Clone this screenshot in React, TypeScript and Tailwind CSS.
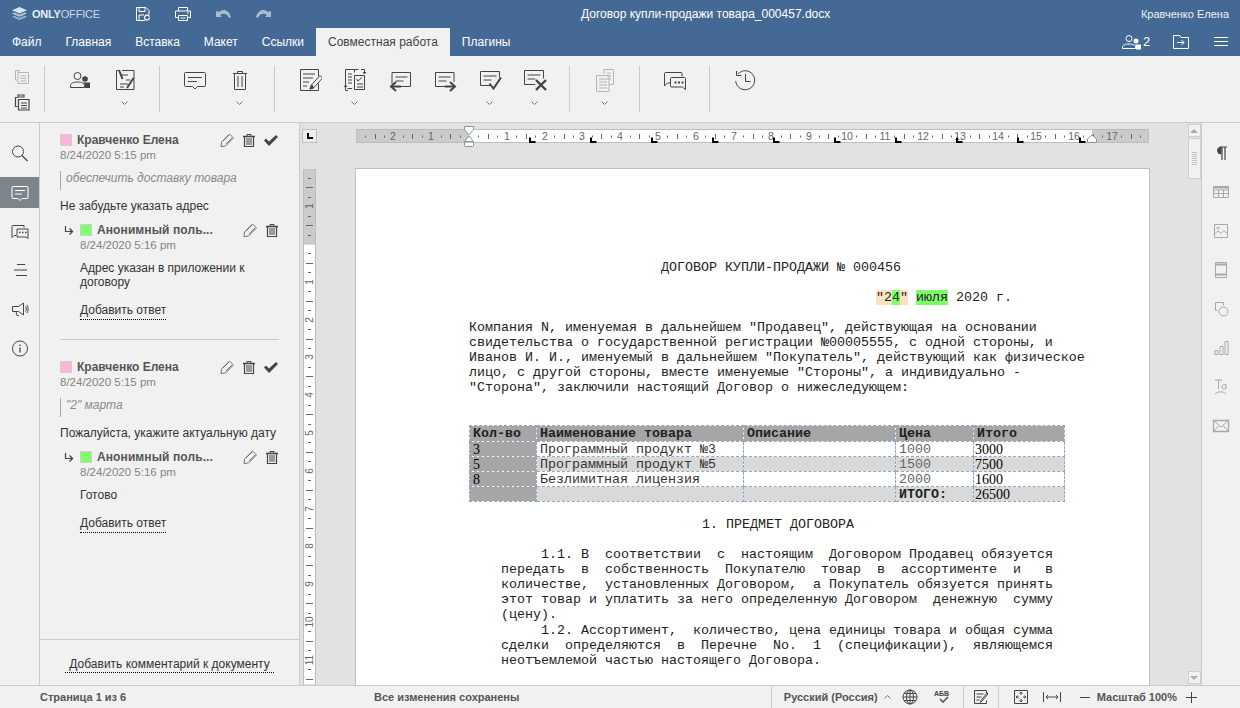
import React from 'react';

const sans = "font-['Liberation_Sans',Arial,sans-serif]";
const mono = "font-['Liberation_Mono','Courier_New',monospace]";
const serif = "font-['Liberation_Serif','Times_New_Roman',serif]";

const Svg: React.FC<{ w?: number; h?: number; className?: string; children: React.ReactNode }> = ({ w = 24, h = 24, className = '', children }) => (
  <svg width={w} height={h} viewBox={`0 0 ${w} ${h}`} fill="none" stroke="currentColor" strokeWidth={1} className={`block shrink-0 ${className}`}>
    {children}
  </svg>
);

// --- toolbar icons, 24x24, top edge at y=68
const icons: Record<string, React.ReactNode> = {
  users: (
    <>
      <circle cx="9.5" cy="8" r="3.5" />
      <path d="M2.5 19.5v-1.8c0-2.4 3-3.7 7-3.7s7 1.3 7 3.7v1.8z" />
      <circle cx="17" cy="11" r="2.8" fill="currentColor" stroke="none" />
      <path d="M15 14.5h7v5.5h-5.2v-3.5z" fill="currentColor" stroke="none" />
    </>
  ),
  review: (
    <>
      <path d="M9 2.5h12v19H3.5v-19h2" />
      <path d="M7 7h8M7 16h8M7 19h4M13 12h4" />
      <path d="M6 2l3.5 9" strokeWidth={2} />
      <path d="M20.5 10l-6.500 10" strokeWidth={2} />
    </>
  ),
  comment: (
    <>
      <path d="M2.5 4.5h19a1 1 0 0 1 1 1v12a1 1 0 0 1-1 1h-7l-2.5 2.5-2.5-2.5h-7a1 1 0 0 1-1-1v-12a1 1 0 0 1 1-1z" />
      <path d="M5 9.5h14M5 13.5h9" />
    </>
  ),
  trash: (
    <>
      <path d="M5 5.5h14M9.5 5.5v-2h5v2" />
      <path d="M6.5 5.5v15.500a.5.5 0 0 0 .5.5h10a.5.5 0 0 0 .5-.5v-15.500" />
      <path d="M10 8v11M14 8v11" />
    </>
  ),
  edit: (
    <>
      <path d="M20.5 8V1.500h-18v21h18v-7" />
      <path d="M5 6h12M5 10h10M5 14h6M5 18h4" />
      <path d="M22 7.500l-9 10-1 3.500 3.500-1 9-10z" fill="#f1f1f1" />
      <path d="M12 21l2-4 1.500 3z" fill="currentColor" />
    </>
  ),
  compare: (
    <>
      <path d="M9 20.5H4.500m-2-2V1.500h9v3M11.500 1.500h4" />
      <path d="M5 6h4M5 9h4M5 12h4M5 15h4" />
      <path d="M11.5 7.500h10v14h-10z" />
      <path d="M13.5 11l1.500 2 4-3.500M14 16h6M14 19h6" />
      <path d="M18 1.5h3.500v4M20 4l1.500 2 1.500-2" />
      <path d="M5 22.5H2.500v-5M1 19l1.500-2 1.500 2" />
    </>
  ),
  prev: (
    <>
      <path d="M4 16V4.500h18.500v14H12" />
      <path d="M7.5 9h12M7.500 13h8" />
      <path d="M3 18.5h10" strokeWidth={2} />
      <path d="M8 14l-5 4.500 5 4.500" strokeWidth={2} />
    </>
  ),
  next: (
    <>
      <path d="M12 18.5H2.500v-14h18.500V14" />
      <path d="M5.5 9h12M5.500 13h8" />
      <path d="M12 18.5h10" strokeWidth={2} />
      <path d="M17 14l5 4.500-5 4.500" strokeWidth={2} />
    </>
  ),
  accept: (
    <>
      <path d="M13 17.5H2.500v-14h19v6" />
      <path d="M5.5 8h13M5.500 12h8" />
      <path d="M11.5 15.500l4 5 7.500-11" strokeWidth={2} />
    </>
  ),
  reject: (
    <>
      <path d="M12 16.5H1.500v-14h19v8" />
      <path d="M4.5 7h13M4.500 11h8" />
      <path d="M13 12l10 10M23 12l-10 10" strokeWidth={2.4} />
    </>
  ),
  pages: (
    <>
      <path d="M11 6V1.500h9.500v15H16" />
      <path d="M14 5h4M14 8h4M14 11h4" />
      <path d="M3.5 7.500h12.500v16H3.500z" />
      <path d="M6 11h8M6 14h8M6 17h8M6 20h8" />
    </>
  ),
  chat: (
    <>
      <path d="M19 8.5V5.500a1 1 0 0 0-1-1H2.500a1 1 0 0 0-1 1v12.500l3-3h3" />
      <path d="M8.5 9.500h13a1 1 0 0 1 1 1v11l-3-2.500h-11a1 1 0 0 1-1-1v-7.500a1 1 0 0 1 1-1z" />
      <path d="M11.5 14.500h2M15 14.500h2M18.500 14.500h2" strokeWidth={2} />
    </>
  ),
  history: (
    <>
      <path d="M5 6a9.500 9.500 0 1 1-2.300 7" />
      <path d="M3.5 3v4.500h5" />
      <path d="M12.5 6v7.500h5" />
    </>
  ),
};

const Chevron: React.FC = () => (
  <svg width="7" height="4" viewBox="0 0 7 4" fill="none" stroke="#777" className="block">
    <path d="M.5.5l3 3 3-3" />
  </svg>
);

const ToolButton: React.FC<{ icon: string; arrow?: boolean; muted?: boolean }> = ({ icon, arrow, muted }) => (
  <div className={`w-[45px] flex flex-col items-center ${muted ? 'text-[#b5b5b5]' : 'text-[#444444]'}`}>
    <Svg>{icons[icon]}</Svg>
    {arrow && <div className="mt-[9px]"><Chevron /></div>}
  </div>
);

const Divider: React.FC = () => <div className="w-px h-[46px] bg-[#cbcbcb] mt-[10px] shrink-0" />;

const Group: React.FC<{ children: React.ReactNode }> = ({ children }) => (
  <div className="flex px-3 pt-3 items-start">{children}</div>
);

// --- small comment icons
const PencilIcon: React.FC = () => (
  <svg width="14" height="14" viewBox="0 0 14 14" fill="none" stroke="#666" strokeWidth={0.9} className="block">
    <path d="M9.5 1l4 4-8 8-4.500.5.5-4.500z" />
    <path d="M3 8l6-6M6 11l6-6" />
  </svg>
);
const BinIcon: React.FC = () => (
  <svg width="12" height="14" viewBox="0 0 12 14" fill="none" stroke="#444" className="block">
    <path d="M0 3.500h12" strokeWidth={1.5} />
    <path d="M4 3V1.500h4V3" />
    <path d="M1.5 4v9.500h9V4" strokeWidth={1.2} />
    <path d="M4 5v7M6 5v7M8 5v7" />
  </svg>
);
const CheckIcon: React.FC = () => (
  <svg width="14" height="11" viewBox="0 0 14 11" fill="#444" className="block">
    <path d="M0 5.500l2-2 3 3 7-6.500 2 2-9 9z" />
  </svg>
);

const ReplyBlock: React.FC<{ body: string[]; bodyGap: string; linkGap: string }> = ({ body, bodyGap, linkGap }) => (
  <div className="relative pl-[40px] pr-[20px]">
    <svg width="10" height="10" viewBox="0 0 10 10" fill="none" stroke="#444" className="absolute left-[24px] top-[3px]">
      <path d="M1.5 0v5.500H8" strokeWidth={1.2} />
      <path d="M5.5 2.500L8.500 5.500l-3 3" strokeWidth={1.4} />
    </svg>
    <div className="flex items-center h-[15px] relative -top-[1px]">
      <span className="w-3 h-3 bg-[#7dff6b] border border-[#cfcfcf] shrink-0" />
      <span className="ml-[5px] font-bold text-[#555555] text-[12px] tracking-[.1px]">Анонимный поль...</span>
      <div className="absolute right-[1px] top-[1px] flex items-center gap-[9px]">
        <PencilIcon />
        <BinIcon />
      </div>
    </div>
    <div className="text-[#848484] text-[11.5px] leading-[15px] font-medium">8/24/2020 5:16 pm</div>
    <div className={`${bodyGap} text-[12px] leading-[14px] text-[#333333] pr-3`}>
      {body.map(l => <div key={l}>{l}</div>)}
    </div>
    <div className={`${linkGap} leading-[14px]`}>
      <span className="inline-block text-[12px] text-[#333333] border-b border-dotted border-black pb-[2px]">Добавить ответ</span>
    </div>
  </div>
);

const Comment: React.FC<{ quote: string; text: string; children: React.ReactNode }> = ({ quote, text, children }) => (
  <div>
    <div className="pl-[20px] pr-[20px]">
      <div className="flex items-center h-[17px] relative">
        <span className="w-3 h-3 bg-[#ffb3d9] border border-[#cfcfcf] shrink-0" />
        <span className="ml-[5px] font-bold text-[#555555] text-[12px]">Кравченко Елена</span>
        <div className="absolute right-[1px] top-[2px] flex items-center gap-[9px]">
          <PencilIcon />
          <BinIcon />
          <CheckIcon />
        </div>
      </div>
      <div className="text-[#848484] text-[11.5px] leading-[15px] font-medium">8/24/2020 5:15 pm</div>
      <div className="mt-[8px] border-l border-[#a8a8a8] pl-[5px] h-[19px] leading-[14px] italic text-[#8a8a8a] text-[12px]">{quote}</div>
      <div className="mt-[9px] text-[12px] leading-[14px] text-[#333333] whitespace-nowrap">{text}</div>
    </div>
    <div className="mt-[10px]">{children}</div>
  </div>
);

// --- rulers
const cm = 37.8;
const range = (a: number, b: number) => Array.from({ length: b - a + 1 }, (_, i) => a + i);

const HRuler: React.FC = () => {
  const zero = 113;
  return (
    <svg width="793" height="14" viewBox="0 0 793 14" className="block overflow-visible ml-[39px]">
      <rect x=".5" y=".5" width="792" height="13" fill="#cbcbcb" stroke="#bdbdbd" />
      <rect x="113" y="1" width="623" height="12" fill="#fff" />
      {range(-12, 72).map(q => {
        const x = Math.round(zero + (q * cm) / 4);
        if (x < 4 || x > 790) return null;
        if (q === 0) return null;
        if (q % 4 === 0) {
          return (
            <text key={q} x={x} y="11" textAnchor="middle" fontSize="10.5" fill="#666" fontFamily="Liberation Sans">
              {Math.abs(q / 4)}
            </text>
          );
        }
        if (q % 2 === 0) return <rect key={q} x={x} y="5" width="1" height="5" fill="#666" />;
        return <rect key={q} x={x} y="6.5" width="1" height="2" fill="#666" />;
      })}
      {[173, 234, 295, 356, 417, 478, 539, 600, 661, 723].map(x => (
        <path key={x} d={`M${x} 8.500h2v3.500h4.500v2H${x}z`} fill="#000" />
      ))}
      {/* indent markers */}
      <path d="M108.5-2.500h9v3L113 6l-4.500-5.500z" fill="#fff" stroke="#8a939c" />
      <path d="M113 7l4.500 5.500H108.500z" fill="#fff" stroke="#8a939c" />
      <path d="M108.5 13h9v3.500a1 1 0 0 1-1 1h-7a1 1 0 0 1-1-1z" fill="#fff" stroke="#8a939c" />
      <path d="M736 6l4.500 4v3.500h-9V10z" fill="#fff" stroke="#8a939c" />
    </svg>
  );
};

const VRuler: React.FC = () => {
  const zero = 75;
  return (
    <svg width="13" height="516" viewBox="0 0 13 516" className="block">
      <rect x=".5" y="0" width="12" height="516" fill="#fff" stroke="#bdbdbd" />
      <rect x=".5" y="0" width="12" height="75" fill="#cbcbcb" stroke="#bdbdbd" />
      {range(-7, 46).map(q => {
        const y = Math.round(zero + (q * cm) / 4);
        if (y < 3 || q === 0) return null;
        if (q % 4 === 0) {
          return (
            <text key={q} x="6" y={y} textAnchor="middle" fontSize="10" fill="#666" fontFamily="Liberation Sans" transform={`rotate(-90 6 ${y}) translate(0 3.500)`}>
              {Math.abs(q / 4)}
            </text>
          );
        }
        if (q % 2 === 0) return <rect key={q} x="3" y={y} width="7" height="1" fill="#666" />;
        return <rect key={q} x="5" y={y} width="3" height="1" fill="#666" />;
      })}
    </svg>
  );
};

// --- document
const rows = [
  { q: '3', name: 'Программный продукт №3', price: '1000', total: '3000', bg: 'bg-white' },
  { q: '5', name: 'Программный продукт №5', price: '1500', total: '7500', bg: 'bg-[#d9d9d9]' },
  { q: '8', name: 'Безлимитная лицензия', price: '2000', total: '1600', bg: 'bg-white' },
];
const cell = 'border border-dashed border-[#8fa9cc] pl-[3px] pr-0 pt-[1px] pb-0 leading-[13px] align-top whitespace-nowrap overflow-hidden';
const totalCell = 'border border-dashed border-[#8fa9cc] pl-[1px] pr-0 pt-[1px] pb-0 leading-[13px] align-top whitespace-nowrap overflow-hidden';

const DocTable: React.FC = () => (
  <table className="table-fixed border-collapse w-[595px] text-[13.33px] text-[#222222]">
    <colgroup>
      <col className="w-[67px]" />
      <col className="w-[207px]" />
      <col className="w-[152px]" />
      <col className="w-[78px]" />
      <col className="w-[91px]" />
    </colgroup>
    <tbody>
      <tr className="bg-[#a6a6a6] h-[16px] font-bold">
        {['Кол-во', 'Наименование товара', 'Описание', 'Цена', 'Итого'].map(h => (
          <td key={h} className={`${cell} ${mono}`}>{h}</td>
        ))}
      </tr>
      {rows.map(r => (
        <tr key={r.q} className={`${r.bg} h-[15px]`}>
          <td className={`${cell} ${serif} bg-[#a6a6a6] text-black text-[14px]`}>{r.q}</td>
          <td className={`${cell} ${mono} text-[#333333]`}>{r.name}</td>
          <td className={cell}></td>
          <td className={`${cell} ${mono} text-[#666666]`}>{r.price}</td>
          <td className={`${totalCell} ${serif} text-black text-[14px]`}>{r.total}</td>
        </tr>
      ))}
      <tr className="bg-[#d9d9d9] h-[15px]">
        <td className={`${cell} bg-[#a6a6a6]`}></td>
        <td className={cell}></td>
        <td className={cell}></td>
        <td className={`${cell} ${mono} font-bold`}>ИТОГО:</td>
        <td className={`${totalCell} ${serif} text-black text-[14px]`}>26500</td>
      </tr>
    </tbody>
  </table>
);

const Page: React.FC = () => (
  <div className={`w-[795px] h-[620px] bg-white border border-[#bfbfbf] ml-[39px] pt-[91px] ${mono} text-[13.33px] leading-[15px] text-[#222222] whitespace-pre`}>
    <div className="pl-[305px]">ДОГОВОР КУПЛИ-ПРОДАЖИ № 000456</div>
    <div className="mt-[15px] pl-[520px]">
      <span className="bg-[#fbe3bd]">"2</span><span className="bg-[#7dff6b]">4</span><span className="bg-[#fbe3bd]">"</span>{' '}
      <span className="bg-[#7dff6b]">июля</span> 2020 г.
    </div>
    <div className="mt-[15px] pl-[113px]">
      <div>Компания N, именуемая в дальнейшем "Продавец", действующая на основании</div>
      <div>свидетельства о государственной регистрации №00005555, с одной стороны, и</div>
      <div>Иванов И. И., именуемый в дальнейшем "Покупатель", действующий как физическое</div>
      <div>лицо, с другой стороны, вместе именуемые "Стороны", а индивидуально -</div>
      <div>"Сторона", заключили настоящий Договор о нижеследующем:</div>
    </div>
    <div className="mt-[30px] pl-[113px]"><DocTable /></div>
    <div className="mt-[15px] pl-[346px]">1. ПРЕДМЕТ ДОГОВОРА</div>
    <div className="mt-[15px] pl-[145px]">
      <div>     1.1. В  соответствии  с  настоящим  Договором Продавец обязуется</div>
      <div>передать  в  собственность  Покупателю  товар  в  ассортименте  и   в</div>
      <div>количестве,  установленных Договором,  а Покупатель обязуется принять</div>
      <div>этот товар и уплатить за него определенную Договором  денежную  сумму</div>
      <div className="mb-[1px]">(цену).</div>
      <div className="mt-[1px]">     1.2. Ассортимент,  количество, цена единицы товара и общая сумма</div>
      <div>сделки  определяются  в  Перечне  No.  1  (спецификации),  являющемся</div>
      <div>неотъемлемой частью настоящего Договора.</div>
    </div>
  </div>
);

const SideIcon: React.FC<{ active?: boolean; children: React.ReactNode }> = ({ active, children }) => (
  <div className={`h-[31px] w-full flex items-center justify-center ${active ? 'bg-[#7d858c] text-white' : 'text-[#444444]'}`}>
    <Svg w={20} h={20}>{children}</Svg>
  </div>
);

const RightIcon: React.FC<{ children: React.ReactNode; dark?: boolean }> = ({ children, dark }) => (
  <div className={`h-[39px] flex items-center justify-center ${dark ? 'text-[#444444]' : 'text-[#a8a8a8]'}`}>
    <Svg w={18} h={18}>{children}</Svg>
  </div>
);

const App: React.FC = () => (
  <div className={`w-[1240px] h-[708px] overflow-hidden flex flex-col bg-[#f1f1f1] ${sans} text-[12px]`}>
    {/* title bar */}
    <div className="h-[28px] bg-[#446995] flex items-center relative text-white shrink-0">
      <div className="flex items-center ml-[12px] w-[123px]">
        <svg width="15" height="14" viewBox="0 0 15 14" fill="#d9e2ec" className="block">
          <path d="M7.5 0L15 3.200 7.500 6.400 0 3.200z" />
          <path d="M2 5.5l5.500 2.300L13 5.500l2 1-7.500 3.200L0 6.500z" opacity=".8" />
          <path d="M2 8.8l5.500 2.300L13 8.800l2 1L7.500 13 0 9.800z" opacity=".6" />
        </svg>
        <span className="ml-[5px] text-[11px] leading-none text-[#e8edf3] font-bold tracking-[-.2px]">ONLY<span className="font-normal text-[#cdd8e4]">OFFICE</span></span>
      </div>
      <div className="flex items-center">
        <div className="w-[40px] flex justify-center ml-[-12px]">
          <Svg w={16} h={16}>
            <path d="M10 14.5H1.500V1.500h9.500l3 3V8" />
            <path d="M4 1.5v4h6v-4M4 14v-5h5" />
            <path d="M14.5 11.500a2.500 2.500 0 1 1-1-2" strokeWidth={1.2} />
            <path d="M13 8v2h2" />
          </Svg>
        </div>
        <div className="w-[40px] flex justify-center">
          <Svg w={18} h={16}>
            <path d="M4.5 5V1.500h9V5" />
            <path d="M4.5 11.500h-3v-6.500h15v6.500h-3" />
            <path d="M4.5 9.500h9v5h-9z" />
            <path d="M6.5 12h5M13 7h2" />
          </Svg>
        </div>
        <div className="w-[40px] flex justify-center text-[#a9bcd2]">
          <svg width="15" height="10" viewBox="0 0 15 10" fill="currentColor" className="block">
            <path d="M0 2v6h6L4 6c3-2 7-2 9 3l2-1C13 1 7-1 3 3z" />
          </svg>
        </div>
        <div className="w-[40px] flex justify-center text-[#a9bcd2]">
          <svg width="15" height="10" viewBox="0 0 15 10" fill="currentColor" className="block">
            <path d="M15 2v6H9l2-2C8 4 4 4 2 9L0 8C2 1 8-1 12 3z" />
          </svg>
        </div>
      </div>
      <div className="absolute left-[581px] text-[12px] whitespace-nowrap">Договор купли-продажи товара_000457.docx</div>
      <div className="ml-auto mr-[11px] text-[11px] text-[#eef2f6]">Кравченко Елена</div>
    </div>

    {/* tabs */}
    <div className="h-[28px] bg-[#446995] flex items-stretch text-white shrink-0">
      <div className="flex items-stretch">
        {['Файл', 'Главная', 'Вставка', 'Макет', 'Ссылки'].map(t => (
          <div key={t} className="flex items-center px-[12px]">{t}</div>
        ))}
        <div className="flex items-center px-[12px] bg-[#f1f1f1] text-[#444444]">Совместная работа</div>
        <div className="flex items-center px-[12px]">Плагины</div>
      </div>
      <div className="ml-auto flex items-center">
        <div className="flex items-center w-[27px] mr-[24px]">
          <Svg w={20} h={16}>
            <circle cx="7" cy="4.5" r="3" />
            <path d="M.5 14.500v-1.500c0-2 3-3 6.500-3s6.500 1 6.500 3v1.500z" />
            <circle cx="14" cy="7" r="2.5" fill="currentColor" stroke="none" />
            <path d="M13 10.5h6v5h-5v-3z" fill="currentColor" stroke="none" />
          </Svg>
          <span className="ml-[1px] text-[13px]">2</span>
        </div>
        <div className="w-[16px] mr-[25px]">
          <Svg w={16} h={14}>
            <path d="M.5 13.500V.500h6.500l1 2h7.500v11z" />
            <path d="M4 7.5h7M8.500 5l2.500 2.500L8.500 10" />
          </Svg>
        </div>
        <div className="mr-[12px] w-[14px]">
          <Svg w={14} h={10}>
            <path d="M0 .5h14M0 4.500h14M0 8.500h14" />
          </Svg>
        </div>
      </div>
    </div>

    {/* toolbar */}
    <div className="h-[67px] flex border-b border-[#cbcbcb] shrink-0">
      <div className="w-[44px] flex flex-col items-center pt-[13px] text-[#444444]">
        <div className="text-[#b5b5b5]">
          <Svg w={16} h={16}>
            <path d="M5 3V1.500H1.500V11H3" />
            <path d="M4 3.5h10.500v11H4z" />
            <path d="M6.5 7h6M6.500 9.500h6M6.500 12h6" />
          </Svg>
        </div>
        <div className="mt-[9px]">
          <Svg w={16} h={17}>
            <path d="M3.5 12.500H1.500V3.500h2M4 3h6v-2H4z" strokeWidth={1.2} />
            <path d="M4.5 5.500h10.500v10.500H4.500z" strokeWidth={1.2} />
            <path d="M7 9h6M7 11.500h6M7 14h6" />
          </Svg>
        </div>
      </div>
      <Divider />
      <Group>
        <ToolButton icon="users" />
        <ToolButton icon="review" arrow />
      </Group>
      <Divider />
      <Group>
        <ToolButton icon="comment" />
        <ToolButton icon="trash" arrow />
      </Group>
      <Divider />
      <Group>
        <ToolButton icon="edit" />
        <ToolButton icon="compare" arrow />
        <ToolButton icon="prev" />
        <ToolButton icon="next" />
        <ToolButton icon="accept" arrow />
        <ToolButton icon="reject" arrow />
      </Group>
      <Divider />
      <Group>
        <ToolButton icon="pages" arrow muted />
      </Group>
      <Divider />
      <Group>
        <ToolButton icon="chat" />
      </Group>
      <Divider />
      <Group>
        <ToolButton icon="history" />
      </Group>
    </div>

    {/* main */}
    <div className="flex-1 min-h-0 flex">
      {/* left rail */}
      <div className="w-[40px] border-r border-[#cbcbcb] pt-[15px] flex flex-col gap-[8px] shrink-0">
        <SideIcon>
          <circle cx="8" cy="7.5" r="5.5" />
          <path d="M12 11.500l5.500 5.500" strokeWidth={1.3} />
        </SideIcon>
        <SideIcon active>
          <path d="M3 3.500h14a1 1 0 0 1 1 1v10a1 1 0 0 1-1 1h-5l-2 2-2-2H3a1 1 0 0 1-1-1v-10a1 1 0 0 1 1-1z" />
          <path d="M5 7.500h10M5 11h7" />
        </SideIcon>
        <SideIcon>
          <path d="M14 5.500V3.500H3a1 1 0 0 0-1 1v11l2-2h2" />
          <path d="M7 7h11v9.500l-2-1.500H7z" />
          <path d="M9 10.500h1.500M12 10.500h1.500M15 10.500h1.500" strokeWidth={1.5} />
        </SideIcon>
        <SideIcon>
          <path d="M7 3.500h8M4 9h13M6 14.500h11" />
        </SideIcon>
        <SideIcon>
          <path d="M2.5 6.500h6L13.500 3v12l-5-3.500h-6z" />
          <path d="M6 11.500l1 4h2M15.500 6.500c1 1.500 1 3.500 0 5M17 5c1.500 2 1.500 6 0 8" />
        </SideIcon>
        <SideIcon>
          <circle cx="10" cy="9.5" r="7.500" />
          <path d="M10 8.500v5" strokeWidth={1.3} />
          <path d="M10 5.500v1.500" strokeWidth={1.3} />
        </SideIcon>
      </div>

      {/* comments */}
      <div className="w-[260px] border-r border-[#cbcbcb] flex flex-col shrink-0">
        <div className="flex-1 min-h-0 pt-[8px]">
          <Comment quote="обеспечить доставку товара" text="Не забудьте указать адрес">
            <ReplyBlock body={['Адрес указан в приложении к', 'договору']} bodyGap="mt-[8px]" linkGap="mt-[14px]" />
          </Comment>
          <div className="mx-[20px] mt-[19px] mb-[18px] h-px bg-[#cbcbcb]" />
          <Comment quote={'"2" марта'} text="Пожалуйста, укажите актуальную дату">
            <ReplyBlock body={['Готово']} bodyGap="mt-[8px]" linkGap="mt-[14px]" />
          </Comment>
        </div>
        <div className="h-[46px] border-t border-[#cbcbcb] flex justify-center pt-[17px]">
          <span className="inline-block h-[16px] px-[4px] leading-[14px] text-[#333333] border-b border-dotted border-black">Добавить комментарий к документу</span>
        </div>
      </div>

      {/* editor */}
      <div className="flex-1 min-w-0 bg-[#e2e2e2] pt-[6px] overflow-hidden">
        <div className="flex items-start ml-[2px]">
          <div className="w-[15px] h-[14px] bg-[#ececec] border border-[#bdbdbd] flex items-center justify-center">
            <span className="block w-[6px] h-[6px] border-l-2 border-b-2 border-black" />
          </div>
          <HRuler />
        </div>
        <div className="flex items-start mt-[25px]">
          <div className="ml-[3px] mt-[1px]"><VRuler /></div>
          <Page />
        </div>
      </div>

      {/* scrollbar */}
      <div className="w-[15px] bg-[#e2e2e2] flex flex-col items-center pt-px pb-px shrink-0 pr-[1px]">
        <div className="w-[13px] h-[13px] bg-[#f1f1f1] border border-[#cfcfcf] flex items-center justify-center">
          <span className="w-0 h-0 border-x-[4px] border-x-transparent border-b-[4px] border-b-[#aaaaaa]" />
        </div>
        <div className="mt-[1px] w-[13px] h-[41px] bg-[#f1f1f1] border border-[#cfcfcf] flex flex-col items-center justify-center gap-[1px]">
          {range(1, 7).map(i => <span key={i} className="w-[5px] h-px bg-[#c4c4c4]" />)}
        </div>
        <div className="mt-auto w-[13px] h-[13px] bg-[#f1f1f1] border border-[#cfcfcf] flex items-center justify-center">
          <span className="w-0 h-0 border-x-[4px] border-x-transparent border-t-[4px] border-t-[#aaaaaa]" />
        </div>
      </div>

      {/* right rail */}
      <div className="w-[39px] border-l border-[#cbcbcb] pt-[10px] shrink-0 -ml-px">
        <RightIcon dark>
          <path d="M8 3h7M10 3v13M13 3v13" strokeWidth={1.2} />
          <path d="M9 3a3.500 3.500 0 0 0 0 7z" fill="currentColor" />
        </RightIcon>
        <RightIcon>
          <path d="M1.5 3.500h15v11h-15zM1.500 7h15M1.500 10.500h15M6.500 7v7.500M11.500 7v7.500" />
          <path d="M1.5 4.500h15" strokeWidth={2} />
        </RightIcon>
        <RightIcon>
          <path d="M2.5 2.500h13v13h-13z" />
          <circle cx="6" cy="6" r="1" />
          <path d="M2.5 12l3.500-3 3 2.500 3-3 3.500 3.500" />
        </RightIcon>
        <RightIcon>
          <path d="M3.5 1.500h11v15h-11z" />
          <path d="M3.5 3.500h11M3.500 13.500h11" strokeWidth={2} />
        </RightIcon>
        <RightIcon>
          <path d="M3.5 2.500h8v3M3.500 2.500v8h2" />
          <circle cx="11.5" cy="11.5" r="4.500" />
        </RightIcon>
        <RightIcon>
          <path d="M3 11.500h3v4H3zM8 7.500h3v8H8zM13 2.500h3v13h-3z" />
        </RightIcon>
        <RightIcon>
          <path d="M3 2h7M6.500 2v9" />
          <path d="M14 6.500v4.500M14 7c-1-1-4-.5-4 2s3 2.500 4 1" />
          <path d="M3 16c3-3 8-3 11 0" />
        </RightIcon>
        <RightIcon>
          <path d="M1.5 3.500h15v11h-15z" strokeWidth={1.3} />
          <path d="M1.5 3.500L9 10l7.500-6.500M1.500 14.500L7 8.500M16.500 14.500L11 8.500" />
        </RightIcon>
      </div>
    </div>

    {/* status bar */}
    <div className="h-[23px] border-t border-[#cbcbcb] flex items-center text-[11px] font-bold text-[#555555] shrink-0 relative">
      <span className="ml-[40px]">Страница 1 из 6</span>
      <span className="absolute left-[374px]">Все изменения сохранены</span>
      <div className="ml-auto mr-[43px] flex items-stretch h-full">
        <div className="flex items-center border-l border-[#cbcbcb] w-[192px] pl-[12px]">
          <span className="whitespace-nowrap">Русский (Россия)</span>
          <svg width="7" height="4" viewBox="0 0 7 4" fill="none" stroke="#777" className="ml-[6px]">
            <path d="M.5 3.500l3-3 3 3" />
          </svg>
          <div className="ml-[11px] text-[#444444]">
            <Svg w={16} h={16}>
              <circle cx="8" cy="8" r="7" />
              <ellipse cx="8" cy="8" rx="3.5" ry="7" />
              <path d="M8 1v14M1 8h14M2 4.500h12M2 11.500h12" />
            </Svg>
          </div>
          <div className="ml-[15px] text-[#444444]">
            <svg width="18" height="16" viewBox="0 0 18 16" fill="none" stroke="currentColor" className="block">
              <text x="1" y="7" fontSize="7" fill="currentColor" stroke="none" fontFamily="Liberation Sans" fontWeight="bold">АБВ</text>
              <path d="M7 10l3 3 5-5" strokeWidth={1.4} />
            </svg>
          </div>
        </div>
        <div className="flex items-center justify-center border-l border-[#cbcbcb] w-[35px] text-[#444444]">
          <Svg w={16} h={16}>
            <path d="M13.5 5V1.500h-12v13h12v-3" />
            <path d="M3.5 5h7M3.500 8h5M3.500 11h3" />
            <path d="M15 5l-6 7-1.500 1.500.5-2 6-7.500z" />
          </Svg>
        </div>
        <div className="flex items-center border-l border-[#cbcbcb] pl-[15px] text-[#444444]">
          <Svg w={14} h={16}>
            <path d="M.5 1.500h13v13H.5z" />
            <path d="M7 3v3M5.500 4.500L7 3l1.500 1.500M7 13v-3M5.500 11.500L7 13l1.500-1.500M2 8h3M3.500 6.500L2 8l1.500 1.500M12 8H9M10.500 6.500L12 8l-1.500 1.500" />
          </Svg>
          <div className="ml-[15px]">
            <Svg w={18} h={12}>
              <path d="M.5 1v10M17.500 1v10M3 6h12M5 4L3 6l2 2M13 4l2 2-2 2" />
            </Svg>
          </div>
          <div className="ml-[19px] w-[10px] h-px bg-[#444444]" />
          <span className="ml-[7px] text-[#555555] whitespace-nowrap">Масштаб 100%</span>
          <div className="ml-[9px]">
            <Svg w={11} h={11}>
              <path d="M0 5.500h11M5.500 0v11" />
            </Svg>
          </div>
        </div>
      </div>
    </div>
  </div>
);

export default App;
